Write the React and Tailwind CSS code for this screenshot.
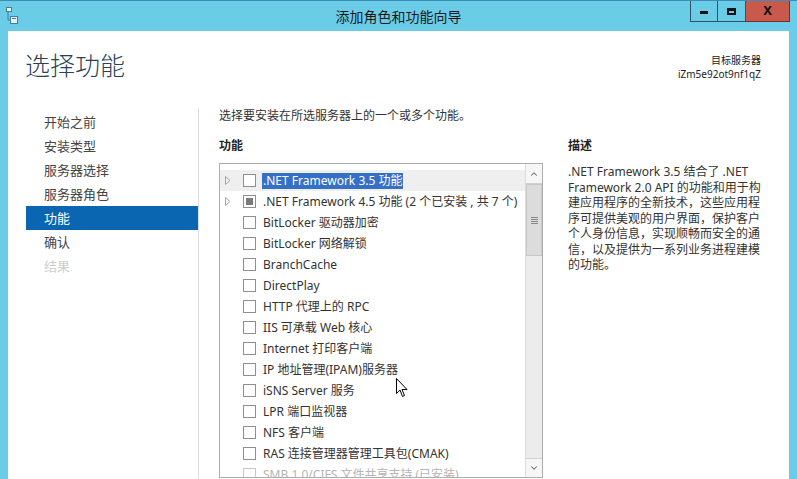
import { ChevronUp, ChevronDown } from 'lucide-react';

const FONT = "font-['Segoe_UI','Noto_Sans','Noto_Sans_CJK_SC',sans-serif]";

const steps = [
  { label: '开始之前' },
  { label: '安装类型' },
  { label: '服务器选择' },
  { label: '服务器角色' },
  { label: '功能', active: true },
  { label: '确认' },
  { label: '结果', disabled: true },
];

const features = [
  { name: '.NET Framework 3.5 功能', expand: true, selected: true },
  { name: '.NET Framework 4.5 功能 (2 个已安装 , 共 7 个)', expand: true, partial: true },
  { name: 'BitLocker 驱动器加密' },
  { name: 'BitLocker 网络解锁' },
  { name: 'BranchCache' },
  { name: 'DirectPlay' },
  { name: 'HTTP 代理上的 RPC' },
  { name: 'IIS 可承载 Web 核心' },
  { name: 'Internet 打印客户端' },
  { name: 'IP 地址管理(IPAM)服务器' },
  { name: 'iSNS Server 服务' },
  { name: 'LPR 端口监视器' },
  { name: 'NFS 客户端' },
  { name: 'RAS 连接管理器管理工具包(CMAK)' },
  { name: 'SMB 1.0/CIFS 文件共享支持 (已安装)', grey: true },
];

const descLines = [
  '.NET Framework 3.5 结合了 .NET',
  'Framework 2.0 API 的功能和用于构',
  '建应用程序的全新技术，这些应用程',
  '序可提供美观的用户界面，保护客户',
  '个人身份信息，实现顺畅而安全的通',
  '信，以及提供为一系列业务进程建模',
  '的功能。',
];

function AppIcon() {
  return (
    <svg width="12" height="17" viewBox="0 0 12 17">
      <rect x="0.5" y="0.5" width="5" height="4" fill="#f4fbfe" stroke="#3f7f9a" />
      <path d="M2 5v8h3" fill="none" stroke="#3f7f9a" />
      <rect x="4.5" y="9.5" width="7" height="7" fill="#e8f1f4" stroke="#3f7f9a" />
      <rect x="6" y="11" width="4" height="1" fill="#3f7f9a" />
    </svg>
  );
}

function Expander() {
  return (
    <svg width="6" height="9" viewBox="0 0 6 9">
      <path d="M0.5 0.5L5 4.5L0.5 8.5Z" fill="none" stroke="#a6a6a6" />
    </svg>
  );
}

function Row({ item }) {
  return (
    <div className={`flex h-[21px] items-center pl-[5px] ${item.selected ? 'bg-[#efefef]' : ''}`}>
      <div className="flex w-[18px] items-center">{item.expand && <Expander />}</div>
      <div className={`flex h-[13px] w-[13px] items-center justify-center border ${item.grey ? 'border-[#c8c8c8]' : 'border-[#8e8f8f]'} bg-white`}>
        {item.partial && <div className="h-[7px] w-[7px] bg-[#7a7a7a]" />}
      </div>
      <span
        className={`ml-[6px] whitespace-nowrap px-[1px] text-[12px] leading-[16px] ${
          item.selected ? 'bg-[#3470c6] text-white' : item.grey ? 'text-[#b5b5b5]' : 'text-[#333]'
        }`}
      >
        {item.name}
      </span>
    </div>
  );
}

function Scrollbar() {
  return (
    <div className="flex w-[17px] shrink-0 flex-col border-l border-[#dcdcdc] bg-[#ececec]">
      <div className="flex h-[20px] items-center justify-center border-b border-[#d0d0d0] bg-[#f6f6f6]">
        <ChevronUp size={10} strokeWidth={2.5} color="#666" />
      </div>
      <div className="flex h-[72px] items-center justify-center border border-[#c9c9c9] bg-[#dcdcdc]">
        <div className="flex flex-col gap-[1px]">
          <div className="h-[1px] w-[7px] bg-[#888]" />
          <div className="h-[1px] w-[7px] bg-[#888]" />
          <div className="h-[1px] w-[7px] bg-[#888]" />
          <div className="h-[1px] w-[7px] bg-[#888]" />
        </div>
      </div>
      <div className="flex-1" />
      <div className="flex h-[19px] items-center justify-center border-t border-[#d0d0d0] bg-[#f6f6f6]">
        <ChevronDown size={10} strokeWidth={2.5} color="#666" />
      </div>
    </div>
  );
}

export default function App() {
  return (
    <div className={`relative flex h-[479px] w-[797px] flex-col overflow-hidden border-t border-[#3a8db3] bg-[#6bcce8] ${FONT}`}>
      {/* title bar */}
      <div className="grid h-[30px] shrink-0 grid-cols-[1fr_auto_1fr]">
        <div className="flex items-start pl-[6px] pt-[6px]">
          <AppIcon />
        </div>
        <div className="flex items-center justify-center pt-[1px] text-[14px] text-[#1a1a1a]">添加角色和功能向导</div>
        <div className="flex items-start justify-end pr-[7px]">
          <div className="flex h-[21px] w-[28px] items-center justify-center border border-t-0 border-[#2b5465] bg-[#6bcce8]">
            <div className="mt-[3px] h-[3px] w-[8px] bg-[#111]" />
          </div>
          <div className="flex h-[21px] w-[28px] items-center justify-center border border-l-0 border-t-0 border-[#2b5465] bg-[#6bcce8]">
            <div className="h-[7px] w-[9px] border-2 border-t-[3px] border-[#111]" />
          </div>
          <div className="flex h-[21px] w-[44px] items-center justify-center border border-l-0 border-t-0 border-[#7a2c24] bg-[#c9594a] text-[13px] font-bold text-[#111]">
            X
          </div>
        </div>
      </div>

      {/* client area */}
      <div className="mx-[8px] flex flex-1 flex-col bg-white">
        <div className="flex h-[77px] shrink-0 items-start justify-between pl-[17px] pr-[28px] pt-[17px]">
          <h1 className="text-[25px] font-light leading-[34px] text-[#2a4257]">选择功能</h1>
          <div className="pt-[5px] text-right text-[10px] leading-[14px] text-[#222]">
            <div>目标服务器</div>
            <div>iZm5e92ot9nf1qZ</div>
          </div>
        </div>

        <div className="flex flex-1">
          <nav className="ml-[18px] w-[172px] shrink-0 pt-[2px]">
            {steps.map((s) => (
              <div
                key={s.label}
                className={`h-[24px] pl-[18px] text-[13px] leading-[24px] ${
                  s.active ? 'bg-[#0a66b0] text-white' : s.disabled ? 'text-[#cfcfcf]' : 'text-[#444]'
                }`}
              >
                {s.label}
              </div>
            ))}
          </nav>
          <div className="w-px bg-[#dcdcdc]" />

          <div className="flex flex-1 flex-col pl-[20px]">
            <p className="text-[12px] leading-[16px] text-[#333]">选择要安装在所选服务器上的一个或多个功能。</p>
            <div className="mt-[14px] grid flex-1 grid-cols-[324px_1fr] gap-[25px]">
              <div className="flex flex-col">
                <div className="text-[12px] font-bold leading-[16px] text-[#222]">功能</div>
                <div className="mt-[9px] flex h-[315px] border border-[#acacac]">
                  <div className="flex-1 overflow-hidden pt-[6px]">
                    {features.map((f) => (
                      <Row key={f.name} item={f} />
                    ))}
                  </div>
                  <Scrollbar />
                </div>
              </div>
              <div>
                <div className="text-[12px] font-bold leading-[16px] text-[#222]">描述</div>
                <div className="mt-[10px] text-[12px] leading-[15.5px] text-[#333]">
                  {descLines.map((l) => (
                    <div key={l} className="whitespace-nowrap">
                      {l}
                    </div>
                  ))}
                </div>
              </div>
            </div>
          </div>
        </div>
      </div>

      {/* mouse pointer */}
      <svg className="absolute left-[396px] top-[377px]" width="12" height="20" viewBox="0 0 12 20">
        <path d="M0.5 0.5V15.5L4 12L6.5 18.5L8.5 17.5L6 11.5H11Z" fill="#fff" stroke="#000" strokeWidth="1" strokeLinejoin="miter" />
      </svg>
    </div>
  );
}
